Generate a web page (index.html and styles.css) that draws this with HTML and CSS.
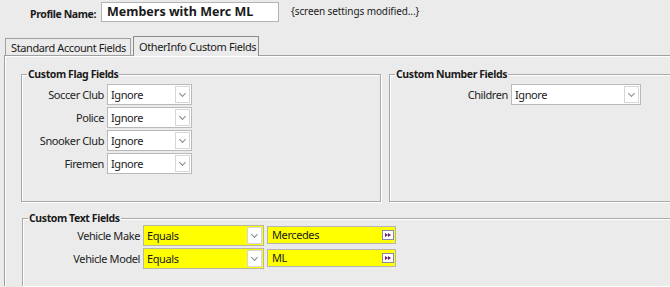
FILE: index.html
```html
<!DOCTYPE html>
<html lang="en">
<head>
    <meta charset="UTF-8">
    <title>Profile Settings</title>
    <link rel="stylesheet" href="styles.css">
</head>
<body>
    <div class="header">
        <label class="profile-label">Profile Name:</label>
        <div class="profile-input">Members with Merc ML</div>
        <span class="modified">{screen settings modified...}</span>
    </div>
    <div class="tabs">
        <div class="tab">Standard Account Fields</div>
        <div class="tab active">OtherInfo Custom Fields</div>
    </div>
    <div class="panel">
        <div class="top-row">
            <fieldset class="group flag-group">
                <legend>Custom Flag Fields</legend>
                <div class="grid flag-grid">
                    <span class="lbl">Soccer Club</span>
                    <div class="combo"><span>Ignore</span><i class="drop"></i></div>
                    <span class="lbl">Police</span>
                    <div class="combo"><span>Ignore</span><i class="drop"></i></div>
                    <span class="lbl">Snooker Club</span>
                    <div class="combo"><span>Ignore</span><i class="drop"></i></div>
                    <span class="lbl">Firemen</span>
                    <div class="combo"><span>Ignore</span><i class="drop"></i></div>
                </div>
            </fieldset>
            <fieldset class="group number-group">
                <legend>Custom Number Fields</legend>
                <div class="grid number-grid">
                    <span class="lbl">Children</span>
                    <div class="combo"><span>Ignore</span><i class="drop"></i></div>
                </div>
            </fieldset>
        </div>
        <fieldset class="group text-group">
            <legend>Custom Text Fields</legend>
            <div class="grid text-grid">
                <span class="lbl">Vehicle Make</span>
                <div class="combo hl"><span>Equals</span><i class="drop"></i></div>
                <div class="textbox hl"><span>Mercedes</span><i class="more"></i></div>
                <span class="lbl">Vehicle Model</span>
                <div class="combo hl"><span>Equals</span><i class="drop"></i></div>
                <div class="textbox hl"><span>ML</span><i class="more"></i></div>
            </div>
        </fieldset>
    </div>
</body>
</html>
```

FILE: styles.css
```css
body {
    margin: 0;
    width: 670px;
    height: 287px;
    overflow: hidden;
    background: #ebebeb;
    color: #1a1a1a;
    font-family: "Noto Sans", sans-serif;
    font-size: 11px;
    letter-spacing: -0.4px;
}
.header {
    display: flex;
    align-items: center;
    height: 20px;
    padding-top: 2px;
}
.profile-label {
    width: 101px;
    padding-right: 5px;
    box-sizing: border-box;
    text-align: right;
    font-weight: bold;
    font-size: 10.5px;
    margin-top: 3px;
}
.profile-input {
    width: 178px;
    height: 20px;
    box-sizing: border-box;
    background: #fff;
    border: 1px solid #b4b4b4;
    padding-left: 5px;
    font-weight: bold;
    font-size: 12.5px;
    line-height: 18px;
    letter-spacing: 0;
}
.modified {
    margin-left: 12px;
    font-size: 10px;
    letter-spacing: -0.1px;
    margin-top: -3px;
}
.tabs {
    display: flex;
    margin-top: 15px;
    padding-left: 5px;
    height: 18px;
    align-items: flex-end;
}
.tab {
    height: 17px;
    line-height: 17px;
    padding: 0 5px;
    width: 126px;
    box-sizing: border-box;
    border: 1px solid #a0a0a0;
    border-bottom: none;
    background: #ebebeb;
    white-space: nowrap;
}
.tab.active {
    height: 20px;
    margin-left: 2px;
    margin-bottom: -1px;
    position: relative;
    z-index: 1;
    border-color: #8c8c8c;
    line-height: 19px;
}
.panel {
    margin-left: 4px;
    border-top: 1px solid #a0a0a0;
    border-left: 1px solid #a0a0a0;
    box-shadow: inset 1px 1px 0 #fff;
    padding: 11px 0 0 16px;
    height: 219px;
}
.top-row {
    display: flex;
    gap: 8px;
}
.group {
    margin: 0;
    padding: 0;
    border: 1px solid #a9a9a9;
    box-shadow: inset 1px 1px 0 #fff, 1px 1px 0 #fff;
    min-width: 0;
    flex-shrink: 0;
    box-sizing: border-box;
}
.group legend {
    font-weight: bold;
    padding: 0 1px;
    margin-left: 5px;
    font-size: 10.5px;
    line-height: 15px;
}
.flag-group {
    width: 360px;
    height: 135px;
}
.number-group {
    width: 281px;
    height: 135px;
    border-right: none;
}
.text-group {
    margin-top: 9px;
    margin-left: 1px;
    width: 648px;
    height: 75px;
    border-right: none;
    border-bottom: none;
}
.grid {
    display: grid;
    align-items: center;
    column-gap: 3px;
    row-gap: 2px;
    padding-top: 2px;
}
.flag-grid {
    grid-template-columns: 82px 85px;
    grid-auto-rows: 21px;
}
.number-grid {
    grid-template-columns: 118px 130px;
    grid-auto-rows: 21px;
}
.text-grid {
    grid-template-columns: 117px 121px 129px;
    grid-auto-rows: 21px;
    row-gap: 2px;
    padding-top: 0;
    margin-top: -1px;
}
.lbl {
    text-align: right;
    white-space: nowrap;
    color: #222;
}
.combo {
    height: 21px;
    box-sizing: border-box;
    background: #fff;
    border: 1px solid #b9b9b9;
    display: flex;
    align-items: center;
    padding: 1px 1px 1px 3px;
}
.combo span {
    flex: 1;
}
.drop {
    width: 15px;
    height: 17px;
    box-sizing: border-box;
    border: 1px solid #d6d6d6;
    background: #fff;
    display: flex;
    align-items: center;
    justify-content: center;
}
.drop::before {
    content: "";
    width: 4px;
    height: 4px;
    border-right: 1px solid #8a8a8a;
    border-bottom: 1px solid #8a8a8a;
    transform: rotate(45deg);
    margin-top: -3px;
}
.hl {
    background: #ffff00;
    border-color: #b8b8a0;
}
.textbox {
    height: 18px;
    box-sizing: border-box;
    border: 1px solid #b4b4b4;
    display: flex;
    align-items: center;
    padding: 0 1px 0 4px;
    margin-top: -2px;
}
.textbox span {
    flex: 1;
}
.more {
    width: 12px;
    height: 10px;
    box-sizing: border-box;
    background: #fff;
    border: 1px solid #8a8aa6;
    display: flex;
    align-items: center;
    justify-content: center;
}
.more::before,
.more::after {
    content: "";
    border-left: 3px solid #6a1a6a;
    border-top: 2px solid transparent;
    border-bottom: 2px solid transparent;
}
```
